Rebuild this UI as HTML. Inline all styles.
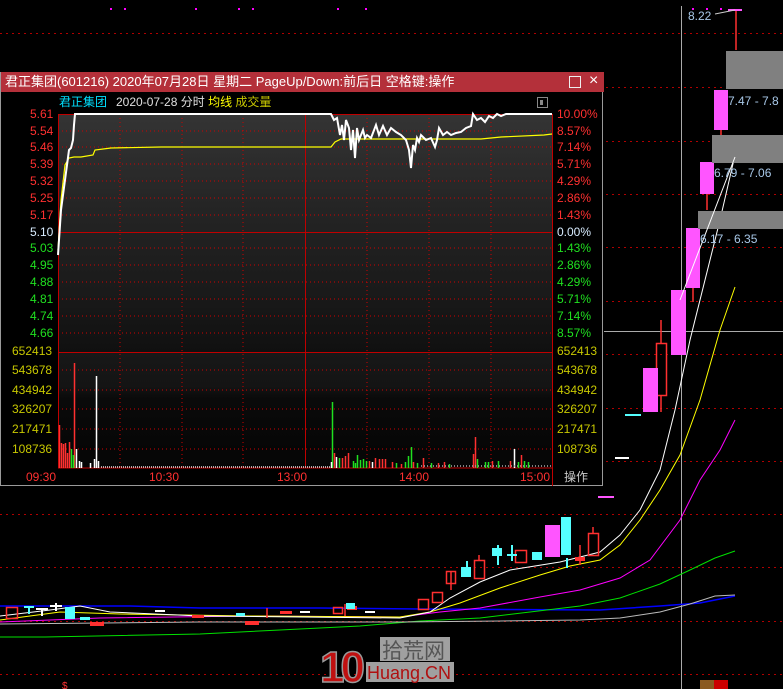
<!DOCTYPE html>
<html><head><meta charset="utf-8"><style>
html,body{margin:0;padding:0;background:#000;width:783px;height:689px;overflow:hidden;font-family:"Liberation Sans","Noto Sans CJK SC",sans-serif}
.abs{position:absolute}
#pop{position:absolute;left:0;top:72px;width:603px;height:414px;background:#000;border:1px solid #9a9a9a;border-top:none;box-sizing:border-box}
#tb{position:absolute;left:0;top:0;width:603px;height:20px;background:#b4303a;color:#fff;font-size:13px;line-height:20px;padding-left:4px;box-sizing:border-box;white-space:nowrap}
.l{position:absolute;font-size:12px;line-height:12px;white-space:nowrap}
</style></head><body>
<svg class="abs" style="left:0;top:0" width="783" height="689">
<g stroke="#b00000" stroke-dasharray="2,4" stroke-width="1">
<line x1="0" y1="33.5" x2="783" y2="33.5"/><line x1="0" y1="87.5" x2="783" y2="87.5"/><line x1="0" y1="141.5" x2="783" y2="141.5"/><line x1="0" y1="194.5" x2="783" y2="194.5"/><line x1="0" y1="247.5" x2="783" y2="247.5"/><line x1="0" y1="301.5" x2="783" y2="301.5"/><line x1="0" y1="354.5" x2="783" y2="354.5"/><line x1="0" y1="408.5" x2="783" y2="408.5"/><line x1="0" y1="461.5" x2="783" y2="461.5"/><line x1="0" y1="514.5" x2="783" y2="514.5"/><line x1="0" y1="567.5" x2="783" y2="567.5"/><line x1="0" y1="621.5" x2="783" y2="621.5"/><line x1="0" y1="674.5" x2="783" y2="674.5"/>
</g>
<line x1="681.5" y1="6" x2="681.5" y2="689" stroke="#aaa"/>
<line x1="604" y1="331.5" x2="783" y2="331.5" stroke="#aaa"/>
<g fill="#f0f">
<rect x="110" y="8" width="2" height="2"/><rect x="124" y="8" width="2" height="2"/><rect x="195" y="8" width="2" height="2"/><rect x="238" y="8" width="2" height="2"/><rect x="252" y="8" width="2" height="2"/><rect x="337" y="8" width="2" height="2"/><rect x="365" y="8" width="2" height="2"/><rect x="692" y="8" width="2" height="2"/><rect x="706" y="8" width="2" height="2"/><rect x="720" y="8" width="2" height="2"/></g>
<polyline fill="none" stroke="#0000ff" stroke-width="1.5" points="0,606 130,606 200,608 320,608 420,609 600,610 660,606 700,603 735,596"/>
<polyline fill="none" stroke="#00e000" stroke-width="1" points="0,637 45,637 200,634 280,630 360,626 420,621 480,618 530,612 580,606 620,598 660,584 690,570 715,558 735,551"/>
<polyline fill="none" stroke="#bbb" stroke-width="1" points="0,624 200,622 400,622 500,621 580,620 620,618 660,612 690,604 715,596 735,595"/>
<polyline fill="none" stroke="#f0f" stroke-width="1" points="0,622 100,618 250,616 400,617 440,612 480,608 540,597 580,590 620,578 650,560 680,520 700,480 720,450 735,420"/>
<polyline fill="none" stroke="#ff0" stroke-width="1" points="0,620 60,612 120,614 250,616 400,617 430,612 460,603 500,588 540,575 570,566 600,560 620,545 640,520 660,490 680,455 700,400 720,330 735,287"/>
<polyline fill="none" stroke="#fff" stroke-width="1" points="0,616 50,610 80,606 110,612 200,616 400,618 430,612 450,598 480,582 510,570 560,562 600,552 620,535 640,510 660,470 675,410 690,340 705,280 720,220 735,155"/>
<g stroke="#ff3030" fill="none" stroke-width="1.5"><rect x="6.5" y="607.5" width="11" height="11"/><rect x="333.5" y="607.5" width="9" height="6"/><rect x="418.5" y="599.5" width="10" height="10"/><rect x="432.5" y="592.5" width="10" height="10"/><rect x="446.5" y="571.5" width="9" height="12"/><rect x="474.5" y="560.5" width="10" height="18"/><rect x="515.5" y="550.5" width="11" height="12"/><rect x="588.5" y="533.5" width="10" height="22"/><rect x="656.5" y="343.5" width="10" height="52"/>
<line x1="451" y1="571" x2="451" y2="590"/><line x1="479" y1="555" x2="479" y2="560"/><line x1="593" y1="527" x2="593" y2="533"/><line x1="661" y1="320" x2="661" y2="343"/><line x1="661" y1="396" x2="661" y2="412"/><line x1="580" y1="545" x2="580" y2="565"/><line x1="736" y1="10" x2="736" y2="50"/><line x1="721" y1="130" x2="721" y2="135"/><line x1="707" y1="194" x2="707" y2="210"/><line x1="693" y1="288" x2="693" y2="302"/><line x1="267" y1="608" x2="267" y2="618"/><line x1="345" y1="604" x2="345" y2="616"/></g>
<g fill="#ff3030"><rect x="575" y="557" width="10" height="4"/><rect x="90" y="622" width="14" height="4"/><rect x="245" y="621" width="14" height="4"/><rect x="347" y="606" width="10" height="4"/><rect x="280" y="611" width="12" height="3"/><rect x="192" y="615" width="12" height="3"/></g>
<g fill="#55ffff"><rect x="461" y="567" width="10" height="10"/><rect x="492" y="548" width="10" height="8"/><rect x="532" y="552" width="10" height="8"/><rect x="561" y="517" width="10" height="38"/><rect x="65" y="607" width="10" height="12"/><rect x="80" y="617" width="10" height="3"/><rect x="346" y="603" width="9" height="6"/><rect x="236" y="613" width="9" height="3"/>
<rect x="24" y="606" width="10" height="2"/><rect x="28" y="606" width="2" height="8"/><rect x="507" y="554" width="10" height="2"/><rect x="511" y="545" width="2" height="16"/><rect x="466" y="561" width="2" height="16"/><rect x="497" y="545" width="2" height="20"/><rect x="566" y="558" width="2" height="10"/><rect x="625" y="414" width="16" height="2"/></g>
<g fill="#fff"><rect x="36" y="608" width="12" height="2"/><rect x="41" y="608" width="2" height="8"/><rect x="50" y="605" width="12" height="2"/><rect x="55" y="603" width="2" height="8"/><rect x="155" y="610" width="10" height="2"/><rect x="300" y="611" width="10" height="2"/><rect x="365" y="611" width="10" height="2"/><rect x="615" y="457" width="14" height="2"/></g>
<g fill="#ff55ff"><rect x="545" y="525" width="15" height="32"/><rect x="643" y="368" width="15" height="44"/><rect x="671" y="290" width="15" height="65"/><rect x="686" y="228" width="14" height="60"/><rect x="700" y="162" width="14" height="32"/><rect x="714" y="90" width="14" height="40"/><rect x="728" y="9" width="14" height="2"/><rect x="598" y="496" width="16" height="2"/></g>
<rect x="726" y="51" width="57" height="38" fill="#808080"/>
<rect x="712" y="135" width="71" height="28" fill="#808080"/>
<rect x="698" y="211" width="85" height="18" fill="#808080"/>
<line x1="680" y1="300" x2="735" y2="157" stroke="#fff"/>
<g font-family="Liberation Sans,sans-serif" font-size="12" fill="#a8c8e8"><text x="688" y="20">8.22</text><text x="728" y="105">7.47 - 7.8</text><text x="714" y="177">6.79 - 7.06</text><text x="700" y="243">6.17 - 6.35</text></g>
<line x1="715" y1="14" x2="735" y2="10" stroke="#ccc"/>
<text x="62" y="689" fill="#f33" font-size="10">$</text>
<rect x="700" y="680" width="14" height="9" fill="#8a5a20"/><rect x="714" y="680" width="14" height="9" fill="#c00"/>
<text x="320" y="682" font-family="Liberation Sans,sans-serif" font-weight="bold" font-size="44" fill="#c01010" stroke="#999" stroke-width="1.5" letter-spacing="-4">10</text>
<rect x="380" y="637" width="70" height="24" fill="#a0a0a0"/>
<text x="382" y="658" font-family="Noto Sans CJK SC,sans-serif" font-size="21" fill="#555">拾荒网</text>
<rect x="366" y="662" width="88" height="20" fill="#a0a0a0"/>
<text x="367" y="679" font-family="Liberation Sans,sans-serif" font-size="18" fill="#b01010">Huang.CN</text>
</svg>

<div id="pop">
<div id="tb">君正集团(601216) 2020年07月28日 星期二 PageUp/Down:前后日 空格键:操作<span style="position:absolute;left:568px;top:4px;width:10px;height:10px;border:1px solid #eee"></span><span style="position:absolute;left:588px;top:-1px;font-size:16px">×</span></div>
<div class="l" style="left:58px;top:24px;color:#00e0ff;font-size:12px">君正集团</div>
<div class="l" style="left:115px;top:24px;color:#e0e0e0">2020-07-28 分时 <span style="color:#ff0">均线</span> <span style="color:#c8c800">成交量</span></div>
<div class="abs" style="left:536px;top:25px;width:11px;height:11px;border:1px solid #888;box-sizing:border-box"><div style="margin:2px;width:3px;height:5px;background:#888"></div></div>
<svg class="abs" style="left:0;top:0" width="603" height="414">
<defs><linearGradient id="g" x1="0" y1="0" x2="0" y2="1"><stop offset="0" stop-color="#343434"/><stop offset="0.1" stop-color="#303030"/><stop offset="0.35" stop-color="#262626"/><stop offset="0.75" stop-color="#1a1a1a"/><stop offset="1" stop-color="#101010"/></linearGradient>
<linearGradient id="g2" x1="0" y1="0" x2="0" y2="1"><stop offset="0" stop-color="#181818"/><stop offset="0.3" stop-color="#141414"/><stop offset="0.4" stop-color="#0a0a0a"/><stop offset="1" stop-color="#050505"/></linearGradient></defs>
<rect x="57" y="42" width="494" height="238" fill="url(#g)"/>
<rect x="57" y="280" width="494" height="116" fill="url(#g2)"/>
<g stroke="#d00000" stroke-dasharray="1,3"><line x1="57" y1="59" x2="551" y2="59"/><line x1="57" y1="75" x2="551" y2="75"/><line x1="57" y1="92" x2="551" y2="92"/><line x1="57" y1="109" x2="551" y2="109"/><line x1="57" y1="126" x2="551" y2="126"/><line x1="57" y1="143" x2="551" y2="143"/><line x1="57" y1="176" x2="551" y2="176"/><line x1="57" y1="193" x2="551" y2="193"/><line x1="57" y1="210" x2="551" y2="210"/><line x1="57" y1="227" x2="551" y2="227"/><line x1="57" y1="244" x2="551" y2="244"/><line x1="57" y1="261" x2="551" y2="261"/>
<line x1="57" y1="298" x2="551" y2="298"/><line x1="57" y1="318" x2="551" y2="318"/><line x1="57" y1="337" x2="551" y2="337"/><line x1="57" y1="357" x2="551" y2="357"/><line x1="57" y1="377" x2="551" y2="377"/>
<line x1="119" y1="42" x2="119" y2="396"/><line x1="181" y1="42" x2="181" y2="396"/><line x1="242" y1="42" x2="242" y2="396"/><line x1="366" y1="42" x2="366" y2="396"/><line x1="428" y1="42" x2="428" y2="396"/><line x1="490" y1="42" x2="490" y2="396"/></g>
<g stroke="#c00000" fill="none"><rect x="57.5" y="42.5" width="494" height="353.5"/><line x1="57" y1="160.5" x2="551" y2="160.5"/><line x1="57" y1="280.5" x2="551" y2="280.5"/><line x1="304.5" y1="42" x2="304.5" y2="396"/><line x1="551.5" y1="396" x2="551.5" y2="414"/></g>
<g transform="translate(0,-72)">
<polyline fill="none" stroke="#ff0" stroke-width="1.2" points="57,250 60,200 64,165 68,158 73,157 80,157 92,155 94,150 110,148 160,147 330,147 334,142 340,139 480,139 500,137 543,135 551,134"/>
<polyline fill="none" stroke="#fff" stroke-width="2" points="57,255 58,240 60,210 62,195 64,180 66,165 68,150 70,148 72,140 73,125 74,114 330,114 333,120 336,118 339,135 341,125 343,140 345,120 348,128 350,150 352,130 354,158 356,128 358,140 360,135 362,130 364,138 366,135 370,138 375,125 378,135 382,126 386,135 390,128 395,132 400,135 405,140 408,150 410,168 412,145 414,150 416,138 418,142 420,135 425,140 430,138 434,147 436,140 438,128 442,135 446,132 450,135 455,133 460,132 465,128 470,126 472,114 476,120 480,118 484,122 488,116 492,118 496,114 500,116 505,114 551,114"/>
<g stroke-width="1.5">
<g stroke="#ff3030"><line x1="58.5" y1="468" x2="58.5" y2="425"/><line x1="60.5" y1="468" x2="60.5" y2="443"/><line x1="62.5" y1="468" x2="62.5" y2="444"/><line x1="64.5" y1="468" x2="64.5" y2="443"/><line x1="66.5" y1="468" x2="66.5" y2="453"/><line x1="68.5" y1="468" x2="68.5" y2="442"/><line x1="73.5" y1="468" x2="73.5" y2="363"/><line x1="333.5" y1="468" x2="333.5" y2="453"/><line x1="341.5" y1="468" x2="341.5" y2="458"/><line x1="344.5" y1="468" x2="344.5" y2="456"/><line x1="347.5" y1="468" x2="347.5" y2="453"/><line x1="368.5" y1="468" x2="368.5" y2="461"/><line x1="374.5" y1="468" x2="374.5" y2="458"/><line x1="378.5" y1="468" x2="378.5" y2="459"/><line x1="381.5" y1="468" x2="381.5" y2="459"/><line x1="384.5" y1="468" x2="384.5" y2="459"/><line x1="391.5" y1="468" x2="391.5" y2="462"/><line x1="400.5" y1="468" x2="400.5" y2="464"/><line x1="412.5" y1="468" x2="412.5" y2="462"/><line x1="422.5" y1="468" x2="422.5" y2="458"/><line x1="437.5" y1="468" x2="437.5" y2="463"/><line x1="443.5" y1="468" x2="443.5" y2="462"/><line x1="472.5" y1="468" x2="472.5" y2="454"/><line x1="474.5" y1="468" x2="474.5" y2="437"/><line x1="491.5" y1="468" x2="491.5" y2="461"/><line x1="509.5" y1="468" x2="509.5" y2="461"/><line x1="520.5" y1="468" x2="520.5" y2="455"/></g>
<g stroke="#20e020"><line x1="70.5" y1="468" x2="70.5" y2="449"/><line x1="72.5" y1="468" x2="72.5" y2="455"/><line x1="331.5" y1="468" x2="331.5" y2="402"/><line x1="338.5" y1="468" x2="338.5" y2="458"/><line x1="352.5" y1="468" x2="352.5" y2="461"/><line x1="354.5" y1="468" x2="354.5" y2="463"/><line x1="356.5" y1="468" x2="356.5" y2="455"/><line x1="359.5" y1="468" x2="359.5" y2="460"/><line x1="362.5" y1="468" x2="362.5" y2="459"/><line x1="365.5" y1="468" x2="365.5" y2="461"/><line x1="395.5" y1="468" x2="395.5" y2="463"/><line x1="404.5" y1="468" x2="404.5" y2="462"/><line x1="407.5" y1="468" x2="407.5" y2="456"/><line x1="410.5" y1="468" x2="410.5" y2="447"/><line x1="416.5" y1="468" x2="416.5" y2="463"/><line x1="430.5" y1="468" x2="430.5" y2="463"/><line x1="448.5" y1="468" x2="448.5" y2="464"/><line x1="476.5" y1="468" x2="476.5" y2="459"/><line x1="484.5" y1="468" x2="484.5" y2="462"/><line x1="487.5" y1="468" x2="487.5" y2="462"/><line x1="497.5" y1="468" x2="497.5" y2="461"/><line x1="517.5" y1="468" x2="517.5" y2="462"/><line x1="523.5" y1="468" x2="523.5" y2="461"/><line x1="527.5" y1="468" x2="527.5" y2="462"/></g>
<g stroke="#fff"><line x1="75.5" y1="468" x2="75.5" y2="449"/><line x1="78.5" y1="468" x2="78.5" y2="461"/><line x1="80.5" y1="468" x2="80.5" y2="462"/><line x1="95.5" y1="468" x2="95.5" y2="376"/><line x1="93.5" y1="468" x2="93.5" y2="459"/><line x1="97.5" y1="468" x2="97.5" y2="461"/><line x1="89.5" y1="468" x2="89.5" y2="463"/><line x1="335.5" y1="468" x2="335.5" y2="457"/><line x1="513.5" y1="468" x2="513.5" y2="449"/><line x1="371.5" y1="468" x2="371.5" y2="462"/><line x1="330.5" y1="468" x2="330.5" y2="462"/></g>
<line x1="100" y1="467" x2="330" y2="467" stroke="#ddd" stroke-dasharray="1,1"/>
<line x1="420" y1="466" x2="551" y2="466" stroke="#aaa" stroke-dasharray="1,2"/>
</g>
</g>
</svg>
<div style="position:absolute;left:0;top:0;font-size:12px">
<div class="l" style="left:29px;top:36px;color:#ff3030">5.61</div><div class="l" style="left:29px;top:53px;color:#ff3030">5.54</div><div class="l" style="left:29px;top:69px;color:#ff3030">5.46</div><div class="l" style="left:29px;top:86px;color:#ff3030">5.39</div><div class="l" style="left:29px;top:103px;color:#ff3030">5.32</div><div class="l" style="left:29px;top:120px;color:#ff3030">5.25</div><div class="l" style="left:29px;top:137px;color:#ff3030">5.17</div><div class="l" style="left:29px;top:154px;color:#d8ecff">5.10</div><div class="l" style="left:29px;top:170px;color:#20e020">5.03</div><div class="l" style="left:29px;top:187px;color:#20e020">4.95</div><div class="l" style="left:29px;top:204px;color:#20e020">4.88</div><div class="l" style="left:29px;top:221px;color:#20e020">4.81</div><div class="l" style="left:29px;top:238px;color:#20e020">4.74</div><div class="l" style="left:29px;top:255px;color:#20e020">4.66</div>
<div class="l" style="left:556px;top:36px;color:#ff3030">10.00%</div><div class="l" style="left:556px;top:53px;color:#ff3030">8.57%</div><div class="l" style="left:556px;top:69px;color:#ff3030">7.14%</div><div class="l" style="left:556px;top:86px;color:#ff3030">5.71%</div><div class="l" style="left:556px;top:103px;color:#ff3030">4.29%</div><div class="l" style="left:556px;top:120px;color:#ff3030">2.86%</div><div class="l" style="left:556px;top:137px;color:#ff3030">1.43%</div><div class="l" style="left:556px;top:154px;color:#d8ecff">0.00%</div><div class="l" style="left:556px;top:170px;color:#20e020">1.43%</div><div class="l" style="left:556px;top:187px;color:#20e020">2.86%</div><div class="l" style="left:556px;top:204px;color:#20e020">4.29%</div><div class="l" style="left:556px;top:221px;color:#20e020">5.71%</div><div class="l" style="left:556px;top:238px;color:#20e020">7.14%</div><div class="l" style="left:556px;top:255px;color:#20e020">8.57%</div>
<div class="l" style="left:11px;top:273px;color:#c8c800">652413</div><div class="l" style="left:11px;top:292px;color:#c8c800">543678</div><div class="l" style="left:11px;top:312px;color:#c8c800">434942</div><div class="l" style="left:11px;top:331px;color:#c8c800">326207</div><div class="l" style="left:11px;top:351px;color:#c8c800">217471</div><div class="l" style="left:11px;top:371px;color:#c8c800">108736</div>
<div class="l" style="left:556px;top:273px;color:#c8c800">652413</div><div class="l" style="left:556px;top:292px;color:#c8c800">543678</div><div class="l" style="left:556px;top:312px;color:#c8c800">434942</div><div class="l" style="left:556px;top:331px;color:#c8c800">326207</div><div class="l" style="left:556px;top:351px;color:#c8c800">217471</div><div class="l" style="left:556px;top:371px;color:#c8c800">108736</div>
<div class="l" style="left:25px;top:399px;color:#ff3030">09:30</div><div class="l" style="left:148px;top:399px;color:#ff3030">10:30</div><div class="l" style="left:276px;top:399px;color:#ff3030">13:00</div><div class="l" style="left:398px;top:399px;color:#ff3030">14:00</div><div class="l" style="left:519px;top:399px;color:#ff3030">15:00</div><div class="l" style="left:563px;top:399px;color:#ccc">操作</div>
</div>
</div>
</body></html>
